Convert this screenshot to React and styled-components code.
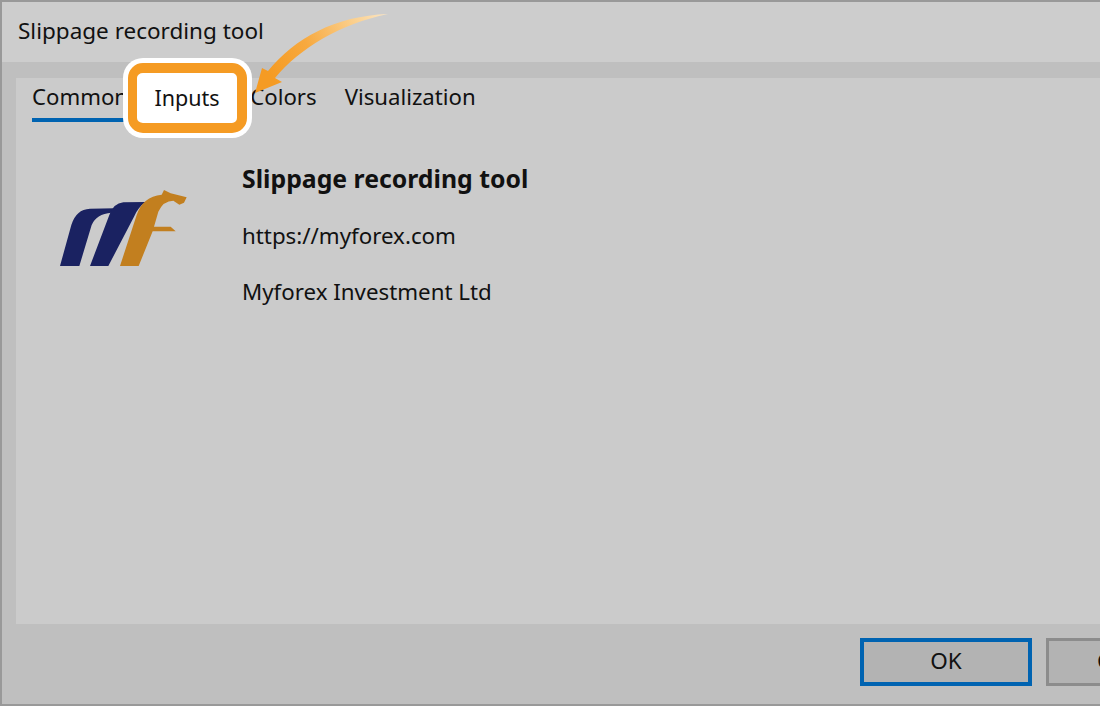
import React from 'react';
import styled, { createGlobalStyle } from 'styled-components';

const GlobalStyle = createGlobalStyle`
  html, body {
    margin: 0;
    padding: 0;
    background: #bfbfbf;
  }
  body {
    font-family: "Noto Sans", "Open Sans", sans-serif;
    color: #111;
  }
`;

const Dialog = styled.div`
  position: relative;
  box-sizing: border-box;
  width: 1100px;
  height: 706px;
  overflow: hidden;
  display: flex;
  flex-direction: column;
  background: #bfbfbf;
  border: 2px solid #999;
  border-right: none;
`;

const TitleBar = styled.div`
  box-sizing: border-box;
  height: 60px;
  flex: none;
  display: flex;
  align-items: center;
  padding: 0 0 3px 16px;
  background: #cdcdcd;
  font-size: 22.5px;
`;

const Panel = styled.div`
  flex: 1;
  margin: 16px 0 0 14px;
  background: #cbcbcb;
  display: flex;
  flex-direction: column;
`;

const TabRow = styled.div`
  display: flex;
  height: 44px;
  padding-left: 16px;
  gap: 28px;
`;

const Tab = styled.div`
  box-sizing: border-box;
  height: 44px;
  line-height: 38px;
  font-size: 22.2px;
  white-space: nowrap;
  width: ${(p) => (p.$active ? '95px' : 'auto')};
  border-bottom: 4px solid ${(p) => (p.$active ? '#0063b1' : 'transparent')};
`;

const About = styled.div`
  display: flex;
  padding: 40px 0 0 44px;
  gap: 55px;
`;

const LogoBox = styled.div`
  flex: none;
  width: 127px;
  padding-top: 28px;
`;

const Info = styled.div`
  display: flex;
  flex-direction: column;
  gap: 24px;
  font-size: 22.3px;
  line-height: 32px;
`;

const Name = styled.div`
  font-weight: 700;
  font-size: 24.8px;
  margin-bottom: 2px;
`;

const Footer = styled.div`
  box-sizing: border-box;
  height: 80px;
  flex: none;
  display: flex;
  padding: 14px 0 0 858px;
  gap: 14px;
`;

const Button = styled.div`
  box-sizing: border-box;
  flex: none;
  width: 172px;
  height: 48px;
  padding-bottom: 3px;
  display: flex;
  align-items: center;
  justify-content: center;
  font-size: 22.5px;
  background: #b3b3b3;
  border: ${(p) => (p.$primary ? '4px solid #0063b1' : '3px solid #8c8c8c')};
`;

const Highlight = styled.div`
  position: absolute;
  left: 126px;
  top: 61px;
  box-sizing: border-box;
  width: 119px;
  height: 70px;
  padding-bottom: 2px;
  display: flex;
  align-items: center;
  justify-content: center;
  background: #fff;
  font-size: 21.5px;
  border: 10px solid #f59b23;
  border-left-width: 9px;
  border-radius: 15px;
  box-shadow: 0 0 0 5px #fff;
`;

const ArrowSvg = styled.svg`
  position: absolute;
  left: 246px;
  top: 8px;
`;

function Logo() {
  return (
    <svg width="127" height="77" viewBox="60 60 381 231">
      <path fill="#1a2261" d="M60 288 L94 165 Q108 118 150 116 L225 115 L215 128 Q168 132 155 165 L118 288 Z" />
      <path fill="#1a2261" d="M150 288 L208 135 Q220 100 250 97 L318 96 Q295 110 282 140 L205 288 Z" />
      <path fill="#c27f1f" d="M240 288 L290 135 Q308 80 365 74 L372 60 L392 70 L440 82 L432 98 L418 104 L400 92 Q370 92 355 125 L342 170 L392 170 L407 184 L338 184 L296 288 Z" />
    </svg>
  );
}

function Arrow() {
  return (
    <ArrowSvg width="144" height="88" viewBox="248 10 144 88">
      <defs>
        <linearGradient id="arrowFade" x1="270" y1="75" x2="388" y2="14" gradientUnits="userSpaceOnUse">
          <stop offset="0" stopColor="#f59b23" />
          <stop offset="0.35" stopColor="#f7a93f" />
          <stop offset="0.75" stopColor="#fbd08e" />
          <stop offset="1" stopColor="#fbe6c6" />
        </linearGradient>
      </defs>
      <path fill="url(#arrowFade)" d="M388 14 C335 16 295 38 268 71 L262 68 L255 93 L282 82 L275 78 C300 48 340 24 388 14 Z" />
    </ArrowSvg>
  );
}

export default function App() {
  return (
    <>
      <GlobalStyle />
      <Dialog>
        <TitleBar>Slippage recording tool</TitleBar>
        <Panel>
          <TabRow>
            <Tab $active>Common</Tab>
            <Tab>Inputs</Tab>
            <Tab>Colors</Tab>
            <Tab>Visualization</Tab>
          </TabRow>
          <About>
            <LogoBox>
              <Logo />
            </LogoBox>
            <Info>
              <Name>Slippage recording tool</Name>
              <div>https://myforex.com</div>
              <div>Myforex Investment Ltd</div>
            </Info>
          </About>
        </Panel>
        <Footer>
          <Button $primary>OK</Button>
          <Button>Cancel</Button>
        </Footer>
        <Highlight>Inputs</Highlight>
        <Arrow />
      </Dialog>
    </>
  );
}
